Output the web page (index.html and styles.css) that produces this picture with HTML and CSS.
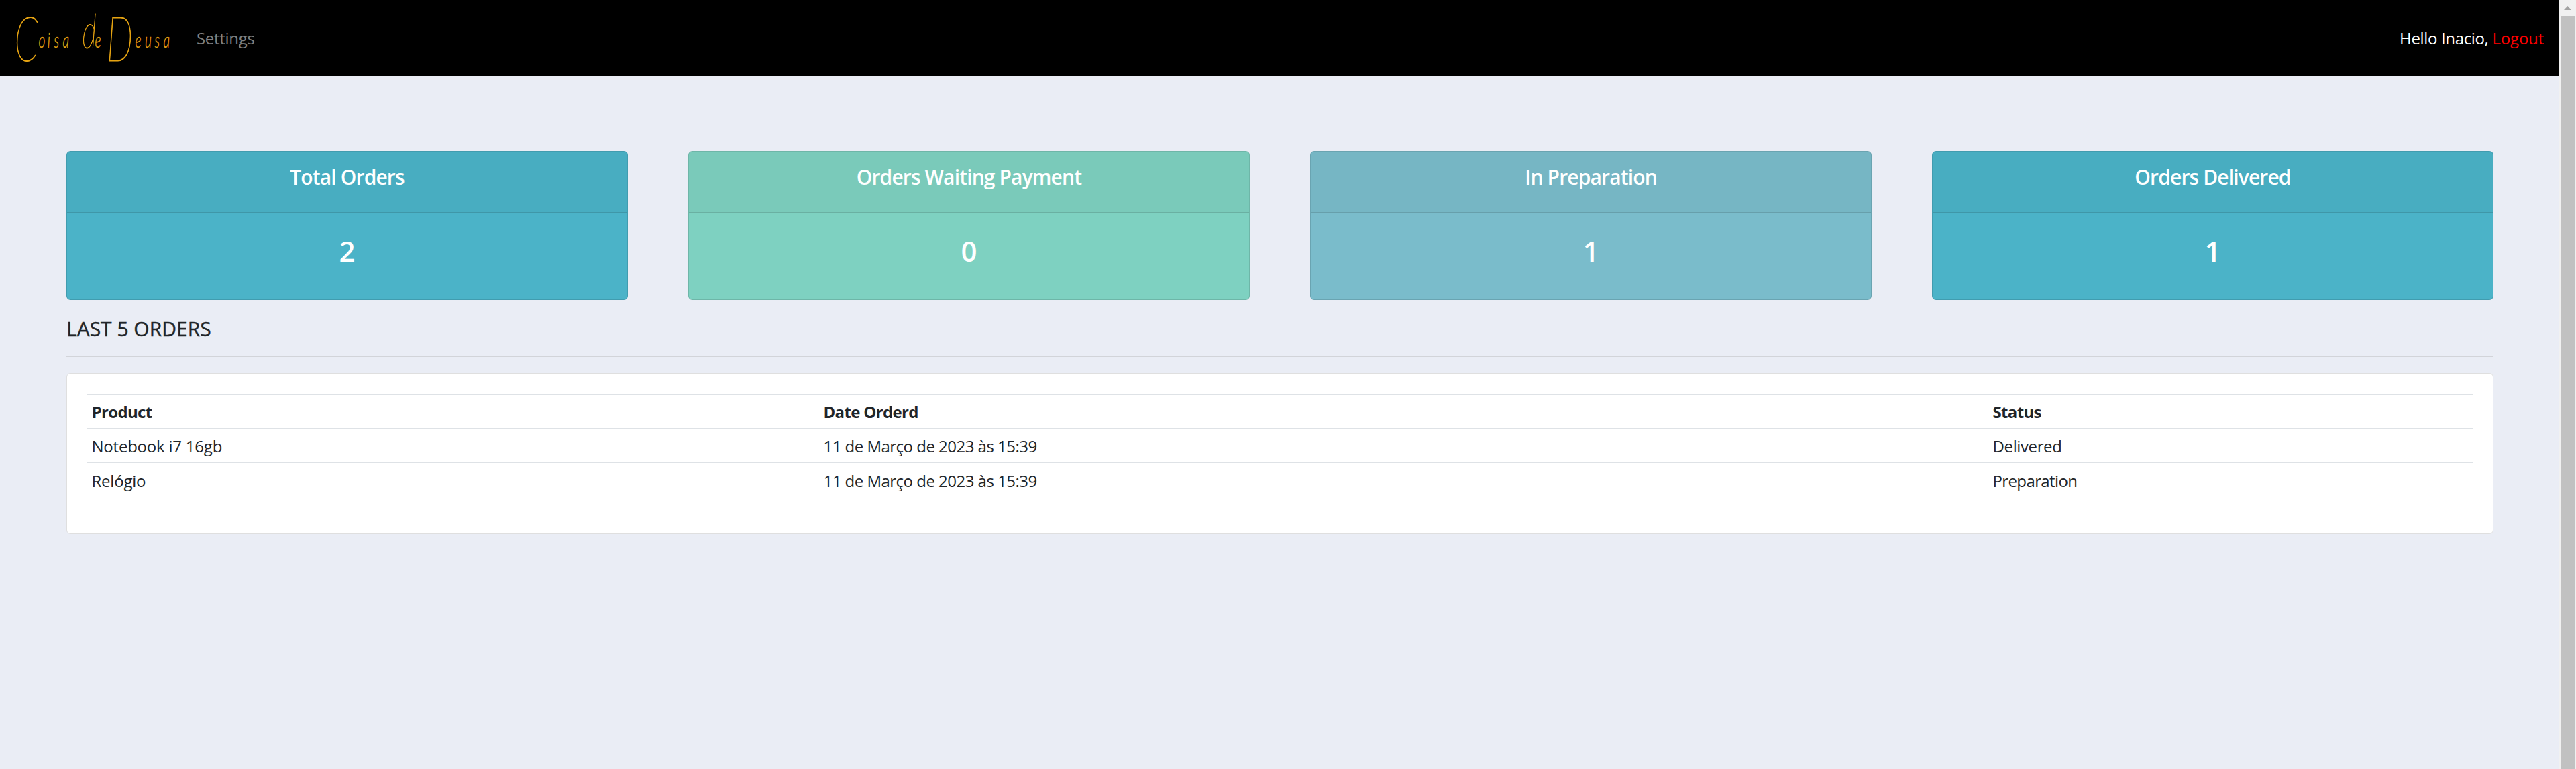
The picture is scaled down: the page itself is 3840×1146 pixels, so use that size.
FILE: index.html
```
<!DOCTYPE html>
<html lang="en">
<head>
<meta charset="utf-8">
<title>Dashboard</title>
<link rel="stylesheet" href="styles.css">
</head>
<body>
<div class="page">
  <header class="navbar">
    <a class="brand" href="#">
      <svg class="logo" width="270" height="113" viewBox="0 0 270 113">
        <g transform="scale(.6 1)" class="logo-text">
          <text><tspan class="cap" x="36" y="91">C</tspan><tspan class="low" x="96 118 134 156" y="71">oisa</tspan></text>
          <text><tspan class="mid" x="204" y="72">d</tspan><tspan class="low" x="236" y="71">e</tspan></text>
          <text><tspan class="cap" x="265" y="91">D</tspan><tspan class="low" x="336 360 384 406" y="71">eusa</tspan></text>
        </g>
      </svg>
    </a>
    <a class="nav-link" href="#">Settings</a>
    <div class="greeting"><span class="hello">Hello Inacio,</span><a class="logout" href="#">Logout</a></div>
  </header>
  <main class="content">
    <section class="cards">
      <article class="card blue"><h5 class="card-head">Total Orders</h5><p class="count">2</p></article>
      <article class="card green"><h5 class="card-head">Orders Waiting Payment</h5><p class="count">0</p></article>
      <article class="card steel"><h5 class="card-head">In Preparation</h5><p class="count">1</p></article>
      <article class="card blue"><h5 class="card-head">Orders Delivered</h5><p class="count">1</p></article>
    </section>
    <h5 class="title">LAST 5 ORDERS</h5>
    <section class="panel">
      <div class="row head"><span>Product</span><span>Date Orderd</span><span>Status</span></div>
      <div class="row"><span class="name">Notebook i7 16gb</span><span class="date">11 de Março de 2023 às 15:39</span><span class="delivered">Delivered</span></div>
      <div class="row last"><span class="name">Relógio</span><span class="date">11 de Março de 2023 às 15:39</span><span class="preparing">Preparation</span></div>
    </section>
  </main>
</div>
<aside class="scrollbar"><svg width="25" height="24"><path d="M7 15h11l-5.500-6z" fill="#a3a3a3"/></svg><div class="thumb"></div></aside>
</body>
</html>
```
FILE: styles.css
```
* { box-sizing: border-box; }
body { margin: 0; display: flex; height: 1146px; overflow: hidden; background: #eaedf5; color: #212529; font: 24px/36px "Open Sans", sans-serif; }
a { text-decoration: none; }
.page { flex: 1; }
.navbar { height: 113px; background: #000; display: flex; align-items: center; padding-right: 23px; }
.brand { width: 293px; height: 113px; }
.logo { display: block; }
.logo-text { font-family: Lato, sans-serif; font-style: italic; font-weight: 300; fill: #e5a312; stroke: #e5a312; stroke-width: .5px; }
.cap { font-size: 92px; font-weight: 100; stroke-width: 1.2px; }
.mid { font-size: 70px; font-weight: 100; stroke-width: 1px; }
.low { font-size: 32px; }
.nav-link { color: #808080; letter-spacing: -.3px; }
.greeting { margin-left: auto; color: #fff; display: flex; gap: 6px; }
.hello { letter-spacing: -.35px; }
.logout { color: #f00; letter-spacing: -.2px; }
.content { padding: 112px 98px 0 99px; }
.cards { display: grid; grid-template-columns: repeat(4, 1fr); gap: 90px; }
.card { height: 222px; border: 1px solid #00000020; border-radius: 6px; color: #fff; text-align: center; overflow: hidden; }
.blue { background: #4bb3c8; }
.green { background: #7ed1c1; }
.steel { background: #7abccb; }
.card-head { height: 91px; margin: 0; padding: 20px 0 0; background: #00000008; border-bottom: 1px solid #00000020; font-size: 30px; line-height: 36px; font-weight: 600; letter-spacing: -.86px; }
.count { margin: 0; padding-top: 32px; font-size: 42px; line-height: 50px; font-weight: 600; }
.title { margin: 0 0 24px; height: 85px; padding-top: 25px; border-bottom: 1px solid #d2d4d9; font-size: 30px; line-height: 36px; font-weight: 500; -webkit-text-stroke: .4px #212529; }
.panel { height: 240px; padding: 30px; background: #fff; border: 1px solid #dfdfdf; border-radius: 6px; }
.row { display: grid; grid-template-columns: 1091px 1743px 1fr; height: 51px; border-top: 1px solid #dee2e6; padding-top: 8px; }
.row > span { padding-left: 6.5px; }
.head { font-weight: 700; letter-spacing: -.65px; }
.last { padding-top: 9px; }
.name { letter-spacing: -.22px; }
.date { letter-spacing: -.52px; }
.delivered { letter-spacing: -.38px; }
.preparing { letter-spacing: -.62px; }
.scrollbar { width: 25px; background: #f1f1f1; display: flex; flex-direction: column; }
.thumb { flex: 1; width: 21px; margin-left: 2px; background: #c1c1c1; }
```
